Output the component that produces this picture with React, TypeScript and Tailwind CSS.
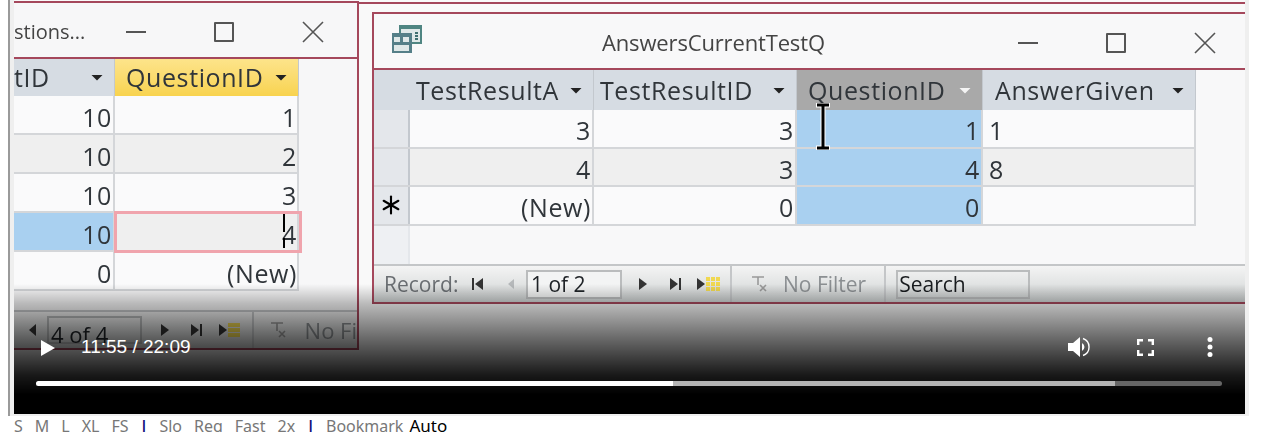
import type { ReactNode } from "react";
import { Asterisk } from "lucide-react";

const video = "font-['Open_Sans','Noto_Sans',sans-serif]";

function Caret({ light }: { light?: boolean }) {
  return (
    <svg width="12" height="7" viewBox="0 0 12 7" className="shrink-0">
      <path d="M0.5 1h11L6 6.5z" fill={light ? "#f4f4f4" : "#222"} />
    </svg>
  );
}

function Head({ label, w, tone = "bg-[#d6dce3] pl-[6px]", light }: { label: string; w: string; tone?: string; light?: boolean }) {
  return (
    <div className={`${w} ${tone} flex h-full shrink-0 items-center justify-between border-r border-[#c3c8ce] pr-[11px]`}>
      <span>{label}</span>
      <Caret light={light} />
    </div>
  );
}

function Cell({ children, w, tone = "", left, tight }: { children?: ReactNode; w: string; tone?: string; left?: boolean; tight?: boolean }) {
  return (
    <div className={`${w} ${tone} ${left ? "justify-start pl-[6px]" : tight ? "justify-end pr-0" : "justify-end pr-[1px]"} flex h-full shrink-0 items-center border-r-2 border-[#d4d6d9] pt-[5px]`}>
      {children}
    </div>
  );
}

function WindowButtons() {
  return (
    <div className="flex items-center gap-[68px]">
      <div className="h-[2px] w-[20px] bg-[#555]" />
      <div className="h-[20px] w-[20px] rounded-[1px] border-2 border-[#555]" />
      <svg width="22" height="22" viewBox="0 0 22 22">
        <path d="M1 1l20 20M21 1L1 21" stroke="#555" strokeWidth="1.6" />
      </svg>
    </div>
  );
}

function Step({ d, fill = "#333", w = 14 }: { d: string; fill?: string; w?: number }) {
  return (
    <svg width={w} height="16" viewBox={`0 0 ${w} 16`} className="shrink-0">
      <path d={d} fill={fill} />
    </svg>
  );
}

function NewRecord() {
  return (
    <div className="flex items-center gap-[1px]">
      <Step d="M1 2l8 6-8 6z" w={9} />
      <div className="grid grid-cols-3 gap-[1px]">
        {[0, 1, 2, 3, 4, 5, 6, 7, 8].map((i) => (
          <div key={i} className="h-[4px] w-[4px] bg-[#f0d850]" />
        ))}
      </div>
    </div>
  );
}

function FilterMark() {
  return (
    <svg width="16" height="18" viewBox="0 0 16 18" className="shrink-0">
      <path d="M1 2h12M7 2v8M9 10l6 6M15 10l-6 6" stroke="#999" strokeWidth="1.6" fill="none" />
    </svg>
  );
}

function IBeam({ h }: { h: number }) {
  return (
    <svg width="20" height={h} viewBox={`0 0 20 ${h}`}>
      <path d={`M3 2h14M10 2v${h - 4}M3 ${h - 2}h14`} stroke="#fff" strokeWidth="5" fill="none" />
      <path d={`M4 2h12M10 2v${h - 4}M4 ${h - 2}h12`} stroke="#000" strokeWidth="3" fill="none" />
    </svg>
  );
}

function LeftWindow() {
  const rows = [
    { a: "10", b: "1", tone: "bg-[#fafafb]" },
    { a: "10", b: "2", tone: "bg-[#efefef]" },
    { a: "10", b: "3", tone: "bg-[#fafafb]" },
    { a: "10", b: "4", tone: "bg-[#efefef]", on: true },
    { a: "0", b: "(New)", tone: "bg-[#fafafb]" },
  ];
  return (
    <div className="absolute left-0 top-[1px] flex h-[349px] w-[345px] flex-col border-y-2 border-r-2 border-[#a5485c] bg-[#f7f7f8] text-[25px] leading-none tracking-[0.6px] text-[#30353a] blur-[0.4px]">
      <div className="flex h-[56px] shrink-0 items-center justify-between border-b-2 border-[#a5485c] pr-[33px] pt-[3px]">
        <span className="text-[20px] tracking-normal text-[#444]">stions...</span>
        <WindowButtons />
      </div>
      <div className="flex h-[37px] shrink-0 items-center">
        <Head label="tID" w="w-[101px]" tone="bg-[#d6dce3] pl-0" />
        <Head label="QuestionID" w="w-[184px]" tone="bg-gradient-to-b from-[#fde48a] to-[#f8d34e] pl-[11px]" />
      </div>
      <div className="relative flex w-fit shrink-0 flex-col">
        {rows.map((r, i) => (
          <div key={i} className="flex h-[39px] items-center border-b-2 border-[#d4d6d9]">
            <Cell w="w-[101px]" tone={r.on ? "bg-[#a9d0f0]" : r.tone}>{r.a}</Cell>
            <Cell w="w-[184px]" tone={r.tone} tight>{r.b}</Cell>
          </div>
        ))}
        <div className="absolute left-[100px] top-[115px] h-[42px] w-[188px] border-[3px] border-[#f0a4ad]" />
        <div className="absolute left-[269px] top-[118px] h-[18px] w-[2px] bg-black" />
        <div className="absolute left-[269px] top-[142px] h-[10px] w-[2px] bg-black" />
      </div>
      <div className="mt-auto flex h-[38px] shrink-0 items-center overflow-hidden whitespace-nowrap border-t-2 border-[#c4c6c8] bg-gradient-to-b from-[#f2f2f2] to-[#d5d8d8] pl-[13px] text-[22px] tracking-normal">
        <Step d="M9 2L2 8l7 6z" w={10} />
        <div className="ml-[10px] flex h-[28px] w-[95px] shrink-0 items-center border-2 border-[#b9bbbc] pl-[2px] pt-[8px] text-[#202428]">4 of 4</div>
        <div className="ml-[18px] flex items-center gap-[20px]">
          <Step d="M1 2l8 6-8 6z" w={10} />
          <Step d="M1 2l8 6-8 6zM10 2h2v12h-2z" />
        </div>
        <div className="ml-[14px]">
          <NewRecord />
        </div>
        <div className="ml-[13px] flex h-full items-center gap-[19px] border-l-2 border-[#c4c6c8] pl-[16px] text-[#8b8f92]">
          <FilterMark />
          <span>No Fi</span>
        </div>
      </div>
    </div>
  );
}

function RightWindow() {
  const rows = [
    { mark: false, a: "3", b: "3", c: "1", d: "1", tone: "bg-[#fafafb]" },
    { mark: false, a: "4", b: "3", c: "4", d: "8", tone: "bg-[#efefef]" },
    { mark: true, a: "(New)", b: "0", c: "0", d: "", tone: "bg-[#fafafb]" },
  ];
  return (
    <div className="absolute left-[358px] top-[12px] flex h-[292px] w-[873px] flex-col border-y-2 border-l-2 border-[#a5485c] bg-[#f8f8f9] text-[25px] leading-none tracking-[0.6px] text-[#30353a] blur-[0.4px]">
      <div className="relative flex h-[56px] shrink-0 items-center justify-between border-b-2 border-[#a5485c] pl-[18px] pr-[29px] pt-[4px]">
        <svg width="30" height="28" viewBox="0 0 30 28" className="mb-[8px]">
          <rect x="7" y="0" width="23" height="19" fill="#4f8582" />
          <rect x="9" y="4" width="19" height="13" fill="#dfe8e8" />
          <rect x="0" y="8" width="20" height="20" fill="#557f88" />
          <path d="M2 12h6v5H2zM11 12h6v5h-6zM2 20h15v6H2z" fill="#dfe8e8" />
          <path d="M23 7h3v2h-3zM23 10h3v2h-3zM23 13h3v2h-3z" fill="#3f6f70" />
        </svg>
        <span className="absolute left-[228px] top-[17px] text-[22px] tracking-[-0.15px] text-[#444]">AnswersCurrentTestQ</span>
        <WindowButtons />
      </div>
      <div className="flex h-[40px] shrink-0 items-center">
        <div className="h-full w-[36px] shrink-0 bg-[#d6dce3]" />
        <Head label="TestResultA" w="w-[184px]" />
        <Head label="TestResultID" w="w-[203px]" />
        <Head label="QuestionID" w="w-[186px]" tone="bg-[#a9a9a9] pl-[11px]" light />
        <Head label="AnswerGiven" w="w-[213px]" tone="bg-[#d6dce3] pl-[12px]" />
      </div>
      <div className="relative flex w-fit shrink-0 flex-col">
        {rows.map((r, i) => (
          <div key={i} className="flex h-[38.5px] items-center border-b-2 border-[#d4d6d9]">
            <div className="flex h-full w-[36px] shrink-0 items-center justify-center border-r-2 border-[#c3c8ce] bg-[#e4e7eb] text-black">
              {r.mark && <Asterisk size={34} strokeWidth={1.5} className="shrink-0" />}
            </div>
            <Cell w="w-[184px]" tone={r.tone}>{r.a}</Cell>
            <Cell w="w-[203px]" tone={r.tone}>{r.b}</Cell>
            <Cell w="w-[186px]" tone="bg-[#a9d0f0]">{r.c}</Cell>
            <Cell w="w-[213px]" tone={r.tone} left>{r.d}</Cell>
          </div>
        ))}
        <div className="absolute left-[439px] top-[-7px]">
          <IBeam h={47} />
        </div>
      </div>
      <div className="flex flex-1">
        <div className="w-[36px] shrink-0 border-r-2 border-[#e4e7eb] bg-[#eef0f3]" />
      </div>
      <div className="flex h-[38px] shrink-0 items-center border-t-2 border-[#c4c6c8] bg-gradient-to-b from-[#f4f4f4] to-[#cfd3d3] pl-[10px] text-[21px] tracking-normal">
        <span className="w-[87px] text-[#6a6e72]">Record:</span>
        <Step d="M1 2h2v12H1zM12 2v12L4 8z" />
        <div className="ml-[21px]">
          <Step d="M8 3v10L2 8z" fill="#b5b8ba" w={9} />
        </div>
        <div className="ml-[11px] flex h-[29px] w-[96px] items-center border-2 border-[#babcbd] bg-[#f3f4f4] pl-[3px] text-[#202428]">1 of 2</div>
        <div className="ml-[16px] flex items-center gap-[21px]">
          <Step d="M1 2l8 6-8 6z" w={10} />
          <Step d="M1 2l8 6-8 6zM10 2h2v12h-2z" />
        </div>
        <div className="ml-[13px]">
          <NewRecord />
        </div>
        <div className="ml-[10px] flex h-full items-center gap-[16px] border-l-2 border-[#c4c6c8] pl-[19px] pr-[18px] text-[#8b8f92]">
          <FilterMark />
          <span>No Filter</span>
        </div>
        <div className="flex h-full items-center border-l-2 border-[#c4c6c8] pl-[10px]">
          <div className="flex h-[29px] w-[134px] items-center border-2 border-[#babcbd] pl-[1px] text-[#181b1e]">Search</div>
        </div>
      </div>
    </div>
  );
}

function Controls() {
  return (
    <>
      <div className="absolute inset-x-0 bottom-0 h-[130px] bg-[linear-gradient(to_bottom,transparent_0%,rgba(0,0,0,0.25)_15%,rgba(0,0,0,0.58)_42%,rgba(0,0,0,0.9)_70%,#000_85%)]" />
      <div className="absolute inset-x-0 bottom-[55px] flex h-[24px] items-center pl-[27px] pr-[32px] font-['Liberation_Sans',sans-serif] text-[19px] leading-none text-white">
        <svg width="14" height="16" viewBox="0 0 14 16" className="mt-[2px] shrink-0">
          <path d="M0 0l14 8-14 8z" fill="#fff" />
        </svg>
        <span className="ml-[26px] mt-[-2px]">11:55 / 22:09</span>
        <svg width="22" height="22" viewBox="0 0 22 22" className="ml-auto shrink-0">
          <path d="M0 7h5l7-6v20l-7-6H0z" fill="#fff" />
          <path d="M14 7a4.5 4.5 0 0 1 0 8z" fill="#fff" />
          <path d="M15 2.5a9 9 0 0 1 0 17" stroke="#fff" strokeWidth="1.4" fill="none" />
        </svg>
        <svg width="17" height="17" viewBox="0 0 17 17" className="ml-[47px] shrink-0">
          <path d="M1.2 6V1.2H6M11 1.2h4.8V6M15.8 11v4.8H11M6 15.8H1.2V11" stroke="#fff" strokeWidth="2.4" fill="none" />
        </svg>
        <svg width="6" height="20" viewBox="0 0 6 20" className="ml-[53px] shrink-0">
          <circle cx="3" cy="2.5" r="2.5" fill="#fff" />
          <circle cx="3" cy="10" r="2.5" fill="#fff" />
          <circle cx="3" cy="17.5" r="2.5" fill="#fff" />
        </svg>
      </div>
      <div className="absolute bottom-[28px] left-[22px] flex h-[5px] w-[1186px] overflow-hidden rounded-full bg-[#666]">
        <div className="h-full w-[637px] bg-white" />
        <div className="h-full w-[442px] bg-[#b4b4b4]" />
      </div>
    </>
  );
}

export default function App() {
  return (
    <div className="h-[432px] w-[1276px] overflow-hidden bg-white">
      <div className="ml-[8px] flex h-[416px] w-[1241px] flex-col border-l-2 border-[#9a9a9a] bg-[#efefef] pb-[2px] pl-[4px] pr-[4px]">
        <div className={`${video} relative h-[414px] w-[1231px] overflow-hidden bg-[#f9f9f9]`}>
          <div className="absolute inset-x-0 top-[2px] h-[2px] bg-[#a5485c]" />
          <LeftWindow />
          <RightWindow />
          <Controls />
        </div>
      </div>
      <div className="flex h-[16px] items-start gap-[12px] pl-[14px] pt-[3px] font-['Noto_Sans',sans-serif] text-[16px] leading-[14px] text-[#777]">
        <span>S</span>
        <span>M</span>
        <span>L</span>
        <span>XL</span>
        <span>FS</span>
        <span className="-mx-[1px] font-bold text-[#10107a]">|</span>
        <span>Slo</span>
        <span>Reg</span>
        <span>Fast</span>
        <span>2x</span>
        <span className="-mx-[1px] font-bold text-[#10107a]">|</span>
        <span>Bookmark</span>
        <span className="-ml-[6px] text-[17px] text-black">Auto</span>
      </div>
    </div>
  );
}
